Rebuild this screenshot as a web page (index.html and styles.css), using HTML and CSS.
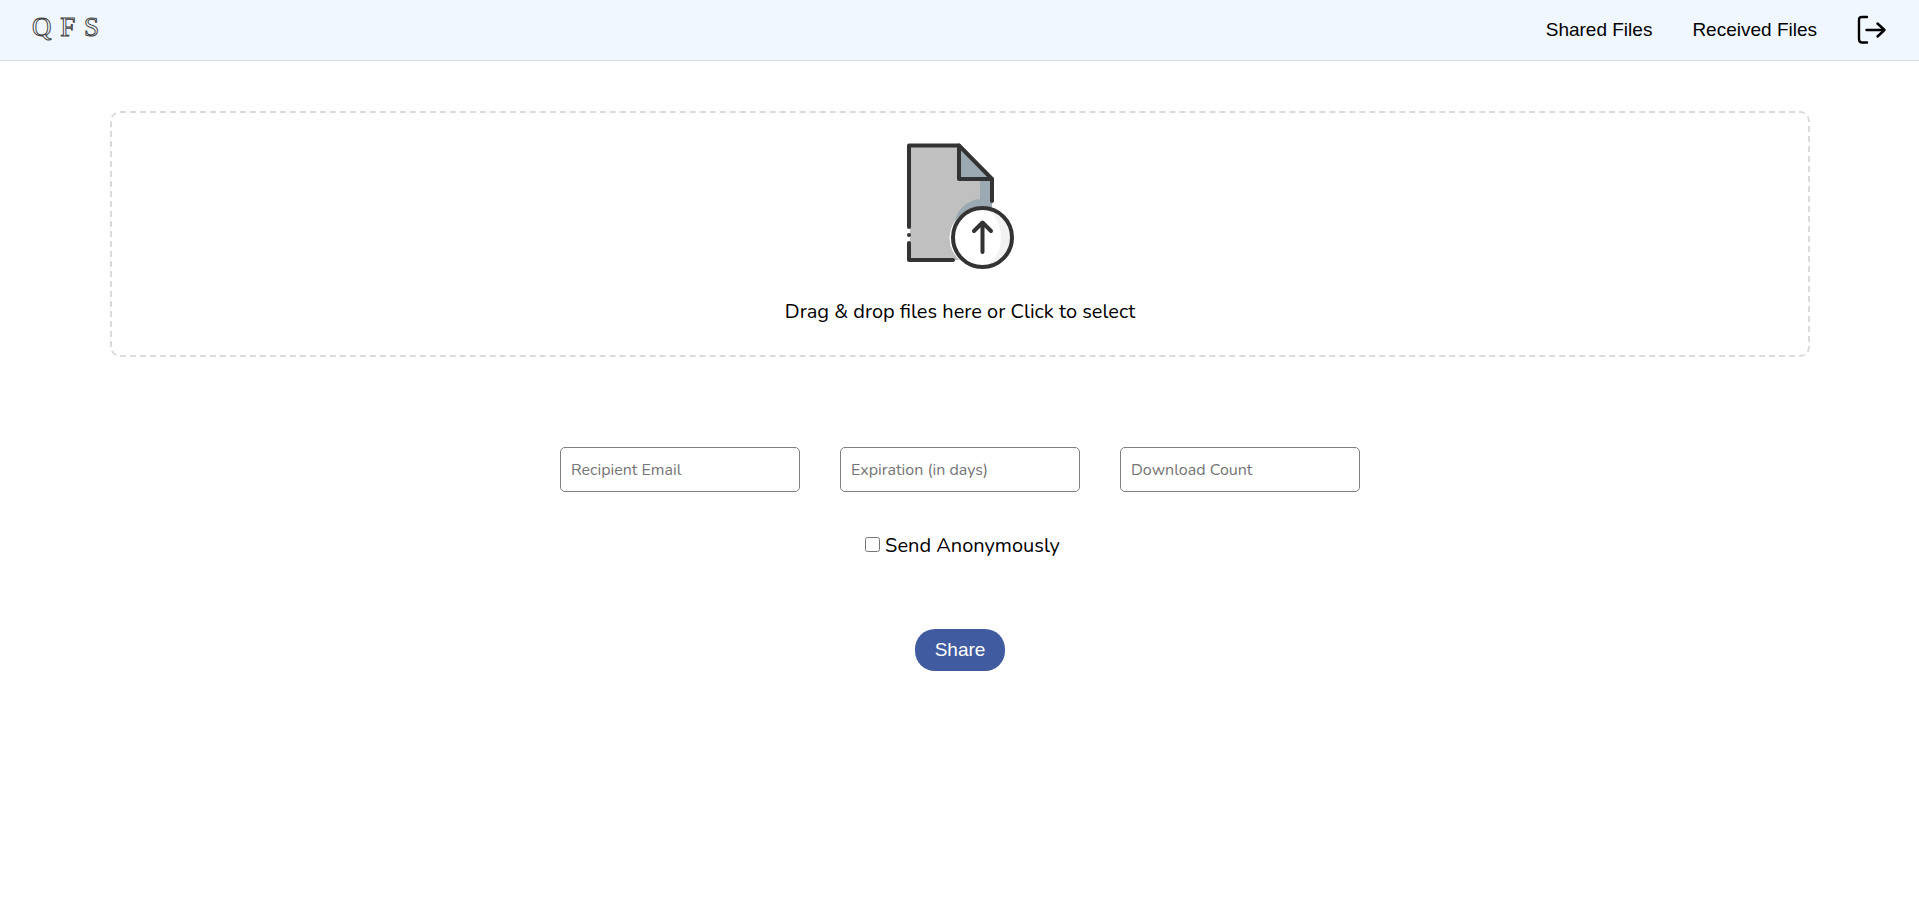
FILE: index.html
```html
<!DOCTYPE html>
<html lang="en">
<head>
<meta charset="utf-8">
<meta name="viewport" content="width=device-width, initial-scale=1">
<title>QFS</title>
<link rel="stylesheet" href="styles.css">
</head>
<body>
<header class="navbar">
  <a class="logo" href="#">Q F S</a>
  <nav class="nav-links">
    <a class="nav-link" href="#">Shared Files</a>
    <a class="nav-link" href="#">Received Files</a>
    <button class="logout" type="button" aria-label="Log out">
      <svg width="30" height="30" viewBox="0 0 30 30" fill="none" stroke="#000" stroke-width="2.400" stroke-linecap="round" stroke-linejoin="round">
        <path d="M10 2H5Q2 2 2 5V24Q2 27.500 5 27.500H10"/>
        <path d="M9.500 15H27.500M20.500 8.500L27.500 15L20.500 21.500"/>
      </svg>
    </button>
  </nav>
</header>
<main class="content">
  <button class="dropzone" type="button">
    <svg class="file-icon" width="128" height="128" viewBox="0 0 128 128">
      <path d="M12 4H62L96 38V80L70 119H12Z" fill="#c0c0c0"/>
      <path d="M62 4L96 38V76H84V38H62Z" fill="#9aa9b2"/>
      <path d="M58 90A28 29 0 0 1 86 58H96V80L60 90Z" fill="#9aa9b2"/>
      <path d="M10 87H14V101H10Z" fill="#fff"/>
      <g fill="none" stroke="#333" stroke-width="4" stroke-linecap="round" stroke-linejoin="round">
        <path d="M13 86V4.500H63L96 38V60"/>
        <path d="M63 4.500V38H96"/>
        <path d="M13 102V119H57"/>
      </g>
      <circle cx="13" cy="94" r="2" fill="#333"/>
      <circle cx="86" cy="96.500" r="29" fill="#f2f2f2"/>
      <path d="M90 69A29 29 0 1 0 90 125Q105 115 105 97Q105 76 90 69Z" fill="#fff"/>
      <g fill="none" stroke="#333" stroke-width="4" stroke-linecap="round" stroke-linejoin="round">
        <circle cx="86.500" cy="96.500" r="29.500"/>
        <path d="M86.500 111V82M78 90L86.500 81.500L95 90"/>
      </g>
    </svg>
    <span class="dropzone-text">Drag &amp; drop files here or Click to select</span>
  </button>
  <form class="share-form">
    <div class="fields">
      <input class="field" type="email" placeholder="Recipient Email" aria-label="Recipient Email">
      <input class="field" type="text" inputmode="numeric" placeholder="Expiration (in days)" aria-label="Expiration (in days)">
      <input class="field" type="text" inputmode="numeric" placeholder="Download Count" aria-label="Download Count">
    </div>
    <div class="anonymous">
      <input class="checkbox" type="checkbox" id="anonymous">
      <label for="anonymous">Send Anonymously</label>
    </div>
    <button class="share" type="button">Share</button>
  </form>
</main>
</body>
</html>
```

FILE: styles.css
```css
* {
  box-sizing: border-box;
}

body {
  margin: 0;
  background: #fff;
  color: #000;
  font-family: Nunito, Lato, sans-serif;
  font-size: 20px;
}

.navbar {
  display: flex;
  align-items: center;
  justify-content: space-between;
  min-height: 61px;
  padding: 0 32px;
  background: #f0f7ff;
  border-bottom: 1px solid #d3dde6;
}

.logo {
  padding-bottom: 6px;
  color: #f0f7ff;
  font-family: "Liberation Serif", serif;
  font-size: 27px;
  line-height: 32px;
  text-decoration: none;
  word-spacing: 2px;
  -webkit-text-stroke: 1px #444;
}

.nav-links {
  display: flex;
  align-items: center;
  gap: 40px;
}

.nav-link {
  color: #000;
  font-family: "Liberation Sans", Arial, sans-serif;
  font-size: 19px;
  text-decoration: none;
}

.logout {
  display: flex;
  padding: 0;
  border: 0;
  background: none;
  cursor: pointer;
}

.content {
  padding: 50px 109px 50px 110px;
}

.dropzone {
  display: flex;
  flex-direction: column;
  align-items: center;
  gap: 30px;
  width: 100%;
  padding: 28px 20px 30px;
  border: 2px dashed #dadae0;
  border-radius: 10px;
  background: none;
  color: inherit;
  font: inherit;
  line-height: 26px;
  cursor: pointer;
}

.share-form {
  display: flex;
  flex-direction: column;
  align-items: center;
  padding-top: 90px;
}

.fields {
  display: flex;
  flex-wrap: wrap;
  justify-content: center;
  gap: 40px;
}

.field {
  width: 240px;
  height: 45px;
  padding: 0 10px;
  border: 1px solid #808080;
  border-radius: 5px;
  font-family: inherit;
  font-size: 16px;
}

.field::placeholder {
  color: #757575;
}

.anonymous {
  display: flex;
  align-items: center;
  gap: 5px;
  padding: 40px 0 70px 5px;
  line-height: 27px;
}

.checkbox {
  width: 15px;
  height: 15px;
  margin: 0 0 3px;
}

.share {
  padding: 10px 20px;
  border: 0;
  border-radius: 20px;
  background: #405b9f;
  color: #fff;
  font-family: "Liberation Sans", Arial, sans-serif;
  font-size: 19px;
  line-height: 22px;
  cursor: pointer;
}
```
